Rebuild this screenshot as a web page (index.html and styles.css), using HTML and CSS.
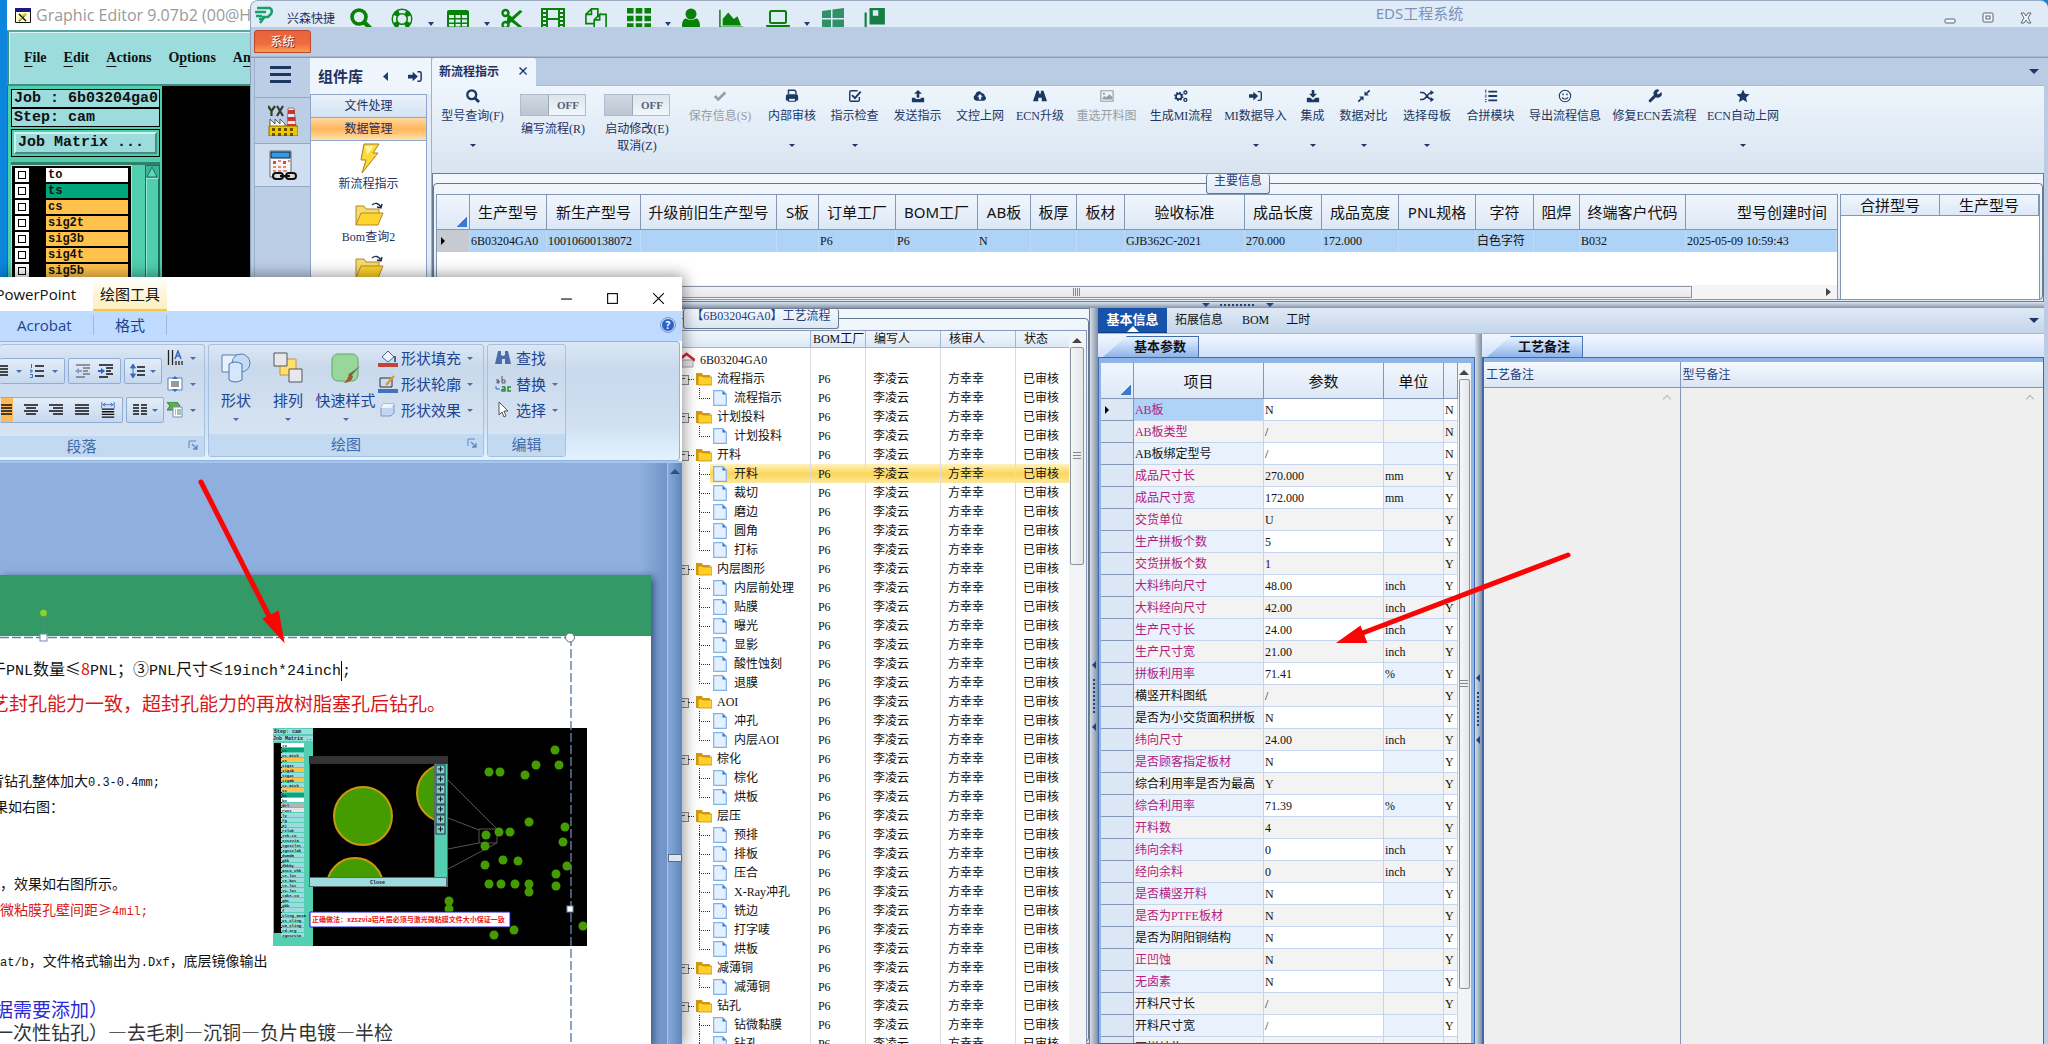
FILE: index.html
```html
<!DOCTYPE html>
<html lang="zh-CN">
<head>
<meta charset="utf-8">
<title>EDS工程系统</title>
<link rel="stylesheet" href="styles.css">
</head>
<body>
<svg class="defs" aria-hidden="true">
  <symbol id="search" viewBox="0 0 22 22"><circle cx="9" cy="9" r="7" fill="none" stroke="currentColor" stroke-width="3.6"/><path d="M14 14l6.500 6.500" stroke="currentColor" stroke-width="4.500"/></symbol>
  <symbol id="ring" viewBox="0 0 22 22"><circle cx="11" cy="11" r="7.500" fill="none" stroke="currentColor" stroke-width="6"/><circle cx="11" cy="11" r="7.500" fill="none" stroke="#dfebf7" stroke-width="3" stroke-dasharray="6.500 5.280" stroke-dashoffset="3.250"/></symbol>
  <symbol id="table" viewBox="0 0 22 22"><rect x="0" y="2" width="22" height="18" rx="2" fill="currentColor"/><path d="M2 7h5v3H2zM8.500 7h5v3h-5zM15 7h5v3h-5zM2 11.500h5v3H2zM8.500 11.500h5v3h-5zM15 11.500h5v3h-5zM2 16h5v2.500H2zM8.500 16h5v2.500h-5zM15 16h5v2.500h-5z" fill="#dfebf7"/></symbol>
  <symbol id="cut" viewBox="0 0 22 22"><g fill="none" stroke="currentColor" stroke-width="2.400"><circle cx="4.500" cy="5" r="3"/><circle cx="4.500" cy="17" r="3"/></g><path d="M7 6l4 3 8-7 2.500 1.500L7 17l-1.500-2zM12 11l9.500 8-2.500 1.500-9-7z" fill="currentColor"/></symbol>
  <symbol id="film" viewBox="0 0 24 22"><path d="M1 1h22v20H1zM6 1v20M18 1v20M6 11h12M1 5h5M1 9h5M1 13h5M1 17h5M18 5h5M18 9h5M18 13h5M18 17h5" fill="none" stroke="currentColor" stroke-width="2"/></symbol>
  <symbol id="copy" viewBox="0 0 24 24"><path d="M7 1h7v9M10 17H1V7l6-6v6H1M16 7h7v16H10V13l6-6v6h-6" fill="none" stroke="currentColor" stroke-width="1.800"/></symbol>
  <symbol id="grid" viewBox="0 0 22 20"><path d="M0 0h6v5H0zM8 0h6v5H8zM16 0h6v5h-6zM0 7h6v5H0zM8 7h6v5H8zM16 7h6v5h-6zM0 14h6v5H0zM8 14h6v5H8zM16 14h6v5h-6z" fill="currentColor"/></symbol>
  <symbol id="user" viewBox="0 0 20 22"><circle cx="10" cy="6" r="5.500" fill="currentColor"/><path d="M1 18c0-5 2-7.500 4-7.500q5 3 10 0c2 0 4 2.500 4 7.500 0 2-1 3-3 3H4c-2 0-3-1-3-3z" fill="currentColor"/></symbol>
  <symbol id="area" viewBox="0 0 26 22"><path d="M1 1v19h25" fill="none" stroke="currentColor" stroke-width="1.600"/><path d="M4 18v-7l6-7 6 7 4-3 4 10z" fill="currentColor"/></symbol>
  <symbol id="laptop" viewBox="0 0 24 20"><rect x="4" y="2" width="16" height="12" rx="1.500" fill="none" stroke="currentColor" stroke-width="2"/><path d="M0 16h24v1q-1 2-3 2H3q-2 0-3-2z" fill="currentColor"/></symbol>
  <symbol id="win" viewBox="0 0 22 22"><path d="M0 3l9-1.300V10H0zM10.500 1.500L22 0v10H10.500zM0 11.500h9V20l-9-1.300zM10.500 11.500H22V22l-11.500-1.600z" fill="#2e9266"/></symbol>
  <symbol id="clone" viewBox="0 0 20 20"><path d="M5 0h14v15H5zM8 2v5h5V2z" fill="#177f45" fill-rule="evenodd"/><path d="M1.500 4v14.500H16" fill="none" stroke="#177f45" stroke-width="2"/></symbol>
  <symbol id="check" viewBox="0 0 16 16"><path d="M2 8l4 4 8-8" fill="none" stroke="currentColor" stroke-width="3"/></symbol>
  <symbol id="print" viewBox="0 0 16 16"><path d="M4 6V1.500h7l1.500 1.500V6" fill="none" stroke="currentColor" stroke-width="1.600"/><path d="M1 8q0-2 2-2h10q2 0 2 2v5h-3v-2.500H4V13H1z" fill="currentColor"/><path d="M4 10.500h8V14H4z" fill="none" stroke="currentColor" stroke-width="1.400"/></symbol>
  <symbol id="checksq" viewBox="0 0 16 16"><path d="M13 9v3.500q0 1.500-1.500 1.500h-8Q2 14 2 12.500v-9Q2 2 3.500 2H11" fill="none" stroke="currentColor" stroke-width="1.600"/><path d="M4.500 7l3.500 3.500L14.500 3" fill="none" stroke="currentColor" stroke-width="2.200"/></symbol>
  <symbol id="upload" viewBox="0 0 16 16"><path d="M8 1l4.500 4.500H9.500V10h-3V5.500h-3zM1 10h4v1.500h6V10h4v5H1z" fill="currentColor"/></symbol>
  <symbol id="download" viewBox="0 0 16 16"><path d="M6.500 1h3v4.500h3L8 10 3.500 5.500h3zM1 10h4l3 2.500 3-2.500h4v5H1z" fill="currentColor"/></symbol>
  <symbol id="cloud" viewBox="0 0 18 16"><path d="M4 14a4 4 0 0 1-1-7.500 4.500 4.500 0 0 1 8.500-2A3 3 0 0 1 15 8a3.200 3.200 0 0 1-1 6z" fill="currentColor"/><path d="M9 5.500l3.500 3.500h-2v3.500h-3V9h-2z" fill="#e8f1fa"/></symbol>
  <symbol id="road" viewBox="0 0 16 16"><path d="M4 2h3v3h2V2h3l4 12h-6v-4H6v4H0z" fill="currentColor"/></symbol>
  <symbol id="image" viewBox="0 0 16 16"><path d="M1 2h14v12H1z" fill="none" stroke="currentColor" stroke-width="1.300"/><circle cx="4.500" cy="5.500" r="1.300" fill="currentColor"/><path d="M3 12V10l2-2 2 1.500L11 6l3 3v3z" fill="currentColor"/></symbol>
  <symbol id="cogs" viewBox="0 0 16 16"><g fill="none" stroke="currentColor"><circle cx="5.500" cy="8.500" r="3.200" stroke-width="2"/><circle cx="5.500" cy="8.500" r="4.600" stroke-width="1.500" stroke-dasharray="1.800 1.800"/><circle cx="13" cy="4" r="1.700" stroke-width="1.500"/><circle cx="13" cy="12.500" r="1.700" stroke-width="1.500"/></g></symbol>
  <symbol id="signin" viewBox="0 0 16 16"><path d="M0 6h5V3l5.500 5L5 13v-3H0z" fill="currentColor"/><path d="M10 3h2.500Q14 3 14 4.500v7q0 1.500-1.500 1.500H10" fill="none" stroke="currentColor" stroke-width="1.600"/></symbol>
  <symbol id="compress" viewBox="0 0 16 16"><path d="M8.500 2.500v5h5zM7.500 13.500v-5h-5z" fill="currentColor"/><path d="M10 6l4.500-4.500M6 10l-4.500 4.500" stroke="currentColor" stroke-width="2"/></symbol>
  <symbol id="random" viewBox="0 0 16 16"><path d="M0 4h3q2 0 5 4t5 4M0 12h3q2 0 5-4t5-4" fill="none" stroke="currentColor" stroke-width="1.800"/><path d="M12 1l4 3-4 3zM12 9l4 3-4 3z" fill="currentColor"/></symbol>
  <symbol id="list" viewBox="0 0 16 16"><path d="M5 3h10M5 8h10M5 13h10" stroke="currentColor" stroke-width="2.200"/><path d="M2 .500v4M1 7h2M1 9h2M1 12h2M1 14.500h2" stroke="currentColor"/></symbol>
  <symbol id="smile" viewBox="0 0 16 16"><g fill="none" stroke="currentColor" stroke-width="1.200"><circle cx="8" cy="8" r="6.500"/><path d="M4.500 9.500q3.500 4 7 0"/></g><path d="M5 5h1.500v2H5zM9.500 5H11v2H9.500z" fill="currentColor"/></symbol>
  <symbol id="wrench" viewBox="0 0 16 16"><path d="M2.500 13.500L9 7" stroke="currentColor" stroke-width="3.400" stroke-linecap="round"/><path d="M8 8a4 4 0 0 1 5-6.500L10.500 4v2h2L15 3.500A4 4 0 0 1 8 8z" fill="currentColor"/></symbol>
  <symbol id="star" viewBox="0 0 16 16"><path d="M8 .500l2.200 5 5.300.500-4 3.600 1.200 5.400L8 12.200 3.300 15l1.200-5.400L.500 6l5.300-.500z" fill="currentColor"/></symbol>
  <symbol id="folder" viewBox="0 0 16 14"><path d="M0 13V1h6l1 2h7v10z" fill="#d29a12"/><path d="M2 13V4h4l1 1h9v8z" fill="#ffd02a" stroke="#c88c10" stroke-width=".800"/></symbol>
  <symbol id="doc" viewBox="0 0 14 16"><path d="M.700.700h9l3.600 3.600v11H.700z" fill="#e2f0ff" stroke="#7fb0e8" stroke-width="1.200"/><path d="M9.500 1v3.500H13z" fill="#2c6fd0"/></symbol>
  <symbol id="home" viewBox="0 0 16 16"><path d="M3 8h11v7H3z" fill="#e6e3e6" stroke="#a8a0a8"/><path d="M0 8L7.500 2 16 8.500" fill="none" stroke="#cc2b3a" stroke-width="2.600"/></symbol>
  <symbol id="openfolder" viewBox="0 0 30 26"><path d="M2 24V5h8l2 3h13v4" fill="#f5dc6e" stroke="#b5892b"/><path d="M2 24l5-12h22l-5 12z" fill="#ffd42e" stroke="#b5892b"/><path d="M18 4q5-4 9 2m1-3l-1 4-4-1" fill="none" stroke="#1c2c50" stroke-width="1.400"/></symbol>
  <symbol id="lines" viewBox="0 0 16 16"><path d="M1 3h14M3 6h10M1 9h14M3 12h10" stroke="#111" stroke-width="1.500"/></symbol>
  <symbol id="just" viewBox="0 0 16 16"><path d="M1 3h14M1 6h14M1 9h14M1 12h14" stroke="#111" stroke-width="1.500"/></symbol>
  <symbol id="right" viewBox="0 0 16 16"><path d="M1 3h14M5 6h10M1 9h14M5 12h10" stroke="#111" stroke-width="1.500"/></symbol>
  <symbol id="dist" viewBox="0 0 16 18"><path d="M1 0v7M15 0v7M2 3h12M5 1L2.500 3 5 5M11 1l2.500 2L11 5" fill="none" stroke="#3a6bc0"/><path d="M1 8h14M1 11h14M1 14h14M1 17h14" stroke="#111" stroke-width="1.500"/></symbol>
  <symbol id="cols" viewBox="0 0 16 16"><path d="M1 3h6M9 3h6M1 6h6M9 6h6M1 9h6M9 9h6M1 12h6M9 12h6" stroke="#111" stroke-width="1.500"/></symbol>
  <symbol id="nums" viewBox="0 0 16 16"><path d="M6 3h9M6 8h9M6 13h9" stroke="#111" stroke-width="1.500"/><path d="M2.500 1v4M1 7h2v2H1M1 11.500h2.500v3H1" fill="none" stroke="#3a6bc0"/></symbol>
  <symbol id="outdent" viewBox="0 0 16 16"><path d="M1 2h14M8 5h7M8 8h5M8 11h7M1 14h9" stroke="#777" stroke-width="1.500"/><path d="M0 8l4-3v6z" fill="#8aa0c8"/><path d="M3 8h4" stroke="#8aa0c8" stroke-width="2"/></symbol>
  <symbol id="indent" viewBox="0 0 16 16"><path d="M1 2h14M8 5h7M8 8h5M8 11h7M1 14h9" stroke="#111" stroke-width="1.500"/><path d="M7 8L3 5v6z" fill="#2a5fd0"/><path d="M0 8h4" stroke="#2a5fd0" stroke-width="2"/></symbol>
  <symbol id="spacing" viewBox="0 0 16 16"><path d="M7 4h8M7 8h8M7 12h8" stroke="#111" stroke-width="1.500"/><path d="M3 1L.500 5h5zM3 15L.500 11h5zM3 4v8" fill="#3a6bc0" stroke="#3a6bc0"/></symbol>
  <symbol id="textdir" viewBox="0 0 16 16"><path d="M1.500 0v15M5.500 0v15M9 11v4M12 11v4M15 11v4" stroke="#222" stroke-width="1.300"/><path d="M8 9l3-8 3 8M9 6h4" fill="none" stroke="#3a6bc0" stroke-width="1.500"/></symbol>
  <symbol id="alignv" viewBox="0 0 16 16"><path d="M1 2h14v12H1z" fill="#fff" stroke="#5a7db5"/><path d="M4 6h8M4 8h8M4 10h8" stroke="#333"/><path d="M8 0L5 3h6zM8 16l-3-3h6z" fill="#3a6bc0"/></symbol>
  <symbol id="smart" viewBox="0 0 16 16"><path d="M0 0h10l3 4-3 4H0l3-4z" fill="#5eae52" stroke="#3a7d35"/><path d="M6 5h9v10H6z" fill="#fff" stroke="#6f8fb8"/><path d="M8 8h1M10 8h4M8 10h1M10 10h4M8 12h1M10 12h4" stroke="#486"/></symbol>
  <symbol id="launch" viewBox="0 0 10 10"><path d="M1 8V1h7" fill="none" stroke="#5f86bd"/><path d="M4 4l5 5M9 5v4H5" fill="none" stroke="#5f86bd" stroke-width="1.300"/></symbol>
</svg>

<main class="desktop">
  <!-- Graphic Editor -->
  <section class="genesis">
    <header class="g-title">
      <svg width="16" height="15" viewBox="0 0 16 15"><path d="M.500.500h15v14H.500z" fill="#ffffd8" stroke="#111"/><path d="M0 0h16v4H0z" fill="#1a1a80"/><path d="M4 6l7 7M11 6l-7 7" stroke="#111" stroke-width="1.500"/><path d="M7 8l4-2M4 12l3-2" stroke="#e8d000" stroke-width="2"/></svg>
      <span>Graphic Editor 9.07b2 (00@HY)</span>
    </header>
    <nav class="g-menu"><a href="#"><u>F</u>ile</a><a href="#"><u>E</u>dit</a><a href="#"><u>A</u>ctions</a><a href="#">O<u>p</u>tions</a><a href="#">A<u>n</u>alysis</a></nav>
    <div class="g-body">
      <div class="g-side">
        <div class="g-job">Job : 6b03204ga0</div>
        <div class="g-job">Step: cam</div>
        <div class="g-frame"><button class="g-matrix">Job Matrix ...</button></div>
        <div class="g-layers">
          <ul>
            <li><label><input type="checkbox"><span class="lay white">to</span></label></li>
            <li><label><input type="checkbox"><span class="lay green">ts</span></label></li>
            <li><label><input type="checkbox"><span class="lay">cs</span></label></li>
            <li><label><input type="checkbox"><span class="lay">sig2t</span></label></li>
            <li><label><input type="checkbox"><span class="lay">sig3b</span></label></li>
            <li><label><input type="checkbox"><span class="lay">sig4t</span></label></li>
            <li><label><input type="checkbox"><span class="lay">sig5b</span></label></li>
          </ul>
          <div class="g-scroll"><svg width="12" height="12" viewBox="0 0 12 12"><path d="M6 1l5 10H1z" fill="#5fd9bb" stroke="#1d6f5b"/></svg><i></i></div>
        </div>
      </div>
    </div>
  </section>

  <!-- EDS -->
  <section class="eds">
    <header class="e-title">
      <svg class="logo" width="18" height="18" viewBox="0 0 18 18"><path d="M2 2h13q3 2 1 6l-3 3H7M0 6h11M1 10h6M4 13h4l-3 4" fill="none" stroke="#17a06b" stroke-width="2.500"/></svg>
      <span class="brand">兴森快捷</span>
      <div class="quick">
        <button aria-label="查找"><svg><use href="#search"/></svg></button>
        <button aria-label="帮助"><svg><use href="#ring"/></svg></button>
        <button aria-label="表格"><svg><use href="#table"/></svg></button>
        <button aria-label="剪切"><svg><use href="#cut"/></svg></button>
        <button aria-label="影片"><svg><use href="#film"/></svg></button>
        <button aria-label="复制"><svg><use href="#copy"/></svg></button>
        <button aria-label="网格"><svg><use href="#grid"/></svg></button>
        <button aria-label="用户"><svg><use href="#user"/></svg></button>
        <button aria-label="图表"><svg><use href="#area"/></svg></button>
        <button aria-label="电脑"><svg><use href="#laptop"/></svg></button>
        <button aria-label="窗口"><svg><use href="#win"/></svg></button>
        <button aria-label="副本"><svg><use href="#clone"/></svg></button>
      </div>
      <h1>EDS工程系统</h1>
      <div class="e-ctl">
        <button aria-label="最小化"><svg viewBox="0 0 12 12"><rect x="1" y="7" width="10" height="4" rx="1"/></svg></button>
        <button aria-label="还原"><svg viewBox="0 0 12 12"><rect x="1" y="1" width="10" height="9" rx="1"/><rect x="4" y="4" width="4" height="3"/></svg></button>
        <button aria-label="关闭"><svg viewBox="0 0 12 12"><path d="M1 1h3l2 3 2-3h3L8 6l3 5H8L6 8l-2 3H1l3-5z"/></svg></button>
      </div>
    </header>
    <div class="e-band"><button class="sys">系统</button></div>
    <div class="e-main">
      <aside class="rail">
        <button class="burger" aria-label="菜单"><i></i><i></i><i></i></button>
        <button aria-label="工厂"><svg width="30" height="31" viewBox="0 0 30 31"><path d="M0 1l3.500 5v5M7 1L3.500 6M9 1l6 10M15 1L9 11" fill="none" stroke="#333c2a" stroke-width="2.200"/><path d="M20 3h6l2 18h-9z" fill="#e9e9e9" stroke="#888"/><path d="M20 5h7v4h-7zM19.500 12h8v4h-8zM19 19h9v4h-9z" fill="#cc3333"/><path d="M2 22v-8l5 5v-5l5 5v-5l5 5v3z" fill="#fff" stroke="#555"/><path d="M1 21h29v10H1z" fill="#f0c800" stroke="#8a6d00"/><path d="M4 23h3v3H4zM10 23h3v3h-3zM16 23h3v3h-3zM22 23h3v3h-3zM4 28h3v3H4zM10 28h3v3h-3zM16 28h3v3h-3zM22 28h3v3h-3z" fill="#6b5200"/></svg></button>
        <button class="on" aria-label="日历"><svg width="30" height="31" viewBox="0 0 30 31"><path d="M2 1h21v26H2z" fill="#f6f6f6" stroke="#667"/><path d="M3 2h19v6H3z" fill="#2f9be0" stroke="#124"/><path d="M5 11h3v3H5zM15 11h3v3h-3z" fill="#e04a20"/><path d="M10 11h3M20 11h2M5 17h3M10 17h3M15 17h3M5 21h3M10 21h3M15 21h4" stroke="#d86a50" stroke-width="1.500"/><g fill="none" stroke="#111" stroke-width="2"><rect x="5" y="23" width="10" height="6" rx="3" fill="#ddd"/><rect x="18" y="23" width="10" height="6" rx="3" fill="#ddd"/><path d="M12 26h10"/></g></svg></button>
      </aside>
      <aside class="lib">
        <header><h2>组件库</h2><svg width="5" height="9" viewBox="0 0 5 9"><path d="M5 0v9L0 4.500z" fill="#1f3f70"/></svg><svg class="nav" width="15" height="15"><use href="#signin"/></svg></header>
        <div class="acc">
          <button>文件处理</button>
          <button class="on">数据管理</button>
          <div class="items">
            <a href="#"><svg width="30" height="31" viewBox="0 0 30 31"><path d="M10 1h15l-6 9h5L8 30l4-13H7z" fill="#ffd83a" stroke="#a77e1a"/><path d="M11 3h9l-7 9z" fill="#fff3a8"/></svg>新流程指示</a>
            <a href="#"><svg width="30" height="26"><use href="#openfolder"/></svg>Bom查询2</a>
            <a href="#"><svg width="30" height="26"><use href="#openfolder"/></svg>Bom查询</a>
          </div>
        </div>
      </aside>
      <div class="work">
        <div class="doctabs"><span class="doctab">新流程指示<button aria-label="关闭">×</button></span><i class="dn"></i></div>
        <div class="ribbon" id="ribbon"></div>
        <section class="group info">
          <h3>主要信息</h3>
          <div class="info-row">
            <div class="gridbox">
              <table class="main">
                <colgroup><col class="w33"><col class="w77"><col class="w94"><col class="w136"><col class="w42"><col class="w77"><col class="w82"><col class="w53"><col class="w46"><col class="w48"><col class="w120"><col class="w77"><col class="w77"><col class="w77"><col class="w58"><col class="w46"><col class="w106"><col></colgroup>
                <thead><tr><th class="corner"></th><th>生产型号</th><th>新生产型号</th><th>升级前旧生产型号</th><th>S板</th><th>订单工厂</th><th>BOM工厂</th><th>AB板</th><th>板厚</th><th>板材</th><th>验收标准</th><th>成品长度</th><th>成品宽度</th><th>PNL规格</th><th>字符</th><th>阻焊</th><th>终端客户代码</th><th class="end">型号创建时间</th></tr></thead>
                <tbody><tr><td class="mark"></td><td>6B03204GA0</td><td>10010600138072</td><td></td><td></td><td>P6</td><td>P6</td><td>N</td><td></td><td></td><td>GJB362C-2021</td><td>270.000</td><td>172.000</td><td></td><td>白色字符</td><td></td><td>B032</td><td>2025-05-09 10:59:43</td></tr></tbody>
              </table>
              <div class="hscroll"><i></i><b></b></div>
            </div>
            <div class="sidebox"><table class="side"><thead><tr><th>合拼型号</th><th>生产型号</th></tr></thead></table></div>
          </div>
        </section>
        <div class="hsplit"><i></i><s></s><i></i></div>
        <div class="lower">
          <section class="group flow">
            <h3>【6B03204GA0】工艺流程</h3>
            <div class="flow-body">
              <table class="tree"><colgroup><col><col class="w55"><col class="w75"><col class="w75"><col class="w53"></colgroup>
                <thead><tr><th></th><th class="tight">BOM工厂</th><th>编写人</th><th>核审人</th><th>状态</th></tr></thead><tbody id="tree"></tbody></table>
              <div class="vscroll"><i class="up"></i><i class="thumb"></i></div>
            </div>
          </section>
          <div class="vsplit"><i></i><s></s><i></i></div>
          <section class="detail">
            <nav class="tabs"><a class="on" href="#">基本信息</a><a href="#">拓展信息</a><a href="#">BOM</a><a href="#">工时</a><i class="dn"></i></nav>
            <div class="panes">
              <div class="pane left">
                <div class="subtab"><span>基本参数</span></div>
                <div class="frame">
                  <table class="params"><colgroup><col class="w33"><col class="w130"><col class="w120"><col class="w60"><col></colgroup>
                    <thead><tr><th class="corner"></th><th>项目</th><th>参数</th><th>单位</th><th></th></tr></thead><tbody id="params"></tbody></table>
                  <div class="vscroll"><i class="up"></i><i class="thumb"></i></div>
                </div>
              </div>
              <div class="vsplit low"><i></i><s></s><i></i></div>
              <div class="pane right">
                <div class="subtab"><span>工艺备注</span></div>
                <div class="frame notes">
                  <div class="note"><h4>工艺备注</h4><i class="chev"></i></div>
                  <div class="note"><h4>型号备注</h4><i class="chev"></i></div>
                </div>
              </div>
            </div>
          </section>
        </div>
      </div>
    </div>
  </section>

  <!-- PowerPoint -->
  <section class="ppt">
    <header class="p-title">
      <span class="p-name">Microsoft PowerPoint</span><span class="p-tool">绘图工具</span>
      <div class="p-ctl">
        <button aria-label="最小化"><svg viewBox="0 0 12 12"><path d="M1 6.500h10"/></svg></button>
        <button aria-label="最大化"><svg viewBox="0 0 12 12"><rect x="1.500" y="1.500" width="9" height="9"/></svg></button>
        <button aria-label="关闭"><svg viewBox="0 0 12 12"><path d="M1 1l10 10M11 1L1 11"/></svg></button>
      </div>
    </header>
    <nav class="p-tabs"><a class="acro" href="#">Acrobat</a><a class="fmt" href="#">格式</a><button class="help" aria-label="帮助">?</button></nav>
    <div class="p-ribbon">
      <div class="pg para">
        <div class="pg-body">
          <div class="prows">
            <div class="prow">
              <div class="seg"><button aria-label="项目符号"><svg><use href="#just"/></svg></button><i class="ca"></i><button aria-label="编号"><svg><use href="#nums"/></svg></button><i class="ca"></i></div>
              <div class="seg"><button aria-label="减少缩进"><svg><use href="#outdent"/></svg></button><button aria-label="增加缩进"><svg><use href="#indent"/></svg></button></div>
              <div class="seg"><button aria-label="行距"><svg><use href="#spacing"/></svg></button><i class="ca"></i></div>
            </div>
            <div class="prow">
              <div class="seg wide"><button class="hot" aria-label="左对齐"><svg><use href="#just"/></svg></button><button aria-label="居中"><svg><use href="#lines"/></svg></button><button aria-label="右对齐"><svg><use href="#right"/></svg></button><button aria-label="两端对齐"><svg><use href="#just"/></svg></button><button aria-label="分散对齐"><svg><use href="#dist"/></svg></button></div>
              <div class="seg"><button aria-label="分栏"><svg><use href="#cols"/></svg></button><i class="ca"></i></div>
            </div>
          </div>
          <div class="pcol">
            <button aria-label="文字方向"><svg><use href="#textdir"/></svg><i class="ca"></i></button>
            <button aria-label="对齐文本"><svg><use href="#alignv"/></svg><i class="ca"></i></button>
            <button aria-label="SmartArt"><svg><use href="#smart"/></svg><i class="ca"></i></button>
          </div>
        </div>
        <footer>段落<svg><use href="#launch"/></svg></footer>
      </div>
      <div class="pg draw">
        <div class="pg-body">
          <button class="big"><svg viewBox="0 0 30 32"><path d="M1 3h17v17H1z" fill="#e8f1fc" stroke="#5b7cae"/><circle cx="20" cy="11" r="9" fill="#c5dbf5" stroke="#5b7cae"/><path d="M8 12q6-4 13 0v16q-7 4-13 0z" fill="#d5e7fb" stroke="#4a74b4"/></svg>形状<i class="ca"></i></button>
          <button class="big"><svg viewBox="0 0 30 32"><path d="M7 7h16v16H7z" fill="#ffdf70" stroke="#c29a2a"/><path d="M1 1h13v13H1zM16 17h13v13H16z" fill="#e6e8ec" stroke="#555"/></svg>排列<i class="ca"></i></button>
          <button class="big"><svg viewBox="0 0 30 32"><rect x="1" y="2" width="26" height="27" rx="6" fill="#98d69a" stroke="#5da765"/><path d="M29 14l-9 10-2-2z" fill="#666"/><path d="M18 21l4 3q-1 7-10 7 5-2 6-10z" fill="#a05a2c"/></svg>快速样式<i class="ca"></i></button>
          <div class="plist">
            <button><svg viewBox="0 0 20 18"><path d="M4 8l6-6 6 6-6 5z" fill="#eef3fa" stroke="#4a6390"/><path d="M0 14h20v4H0z" fill="#c4443c"/><path d="M17 7v6" stroke="#4a6390" stroke-width="2"/></svg>形状填充<i class="ca"></i></button>
            <button><svg viewBox="0 0 20 18"><path d="M2 3h12v9H2z" fill="none" stroke="#333"/><path d="M16 1L8 10" stroke="#d89a30" stroke-width="2.500"/><path d="M0 14h20v4H0z" fill="#4472b8"/></svg>形状轮廓<i class="ca"></i></button>
            <button><svg viewBox="0 0 20 18"><path d="M5 3h11v9l-3 3H3V7z" fill="#c3d5f2" stroke="#7d96c4"/><path d="M5 3h11l-3 4H3z" fill="#eef4fd"/></svg>形状效果<i class="ca"></i></button>
          </div>
        </div>
        <footer>绘图<svg><use href="#launch"/></svg></footer>
      </div>
      <div class="pg edit">
        <div class="pg-body">
          <div class="plist">
            <button><svg viewBox="0 0 20 18"><path d="M5 2h3v4l2 1 2-1V2h3l3 13h-6v-5H9v5H2z" fill="#4a6ca8"/></svg>查找</button>
            <button><svg viewBox="0 0 20 18"><path d="M3 5q3-1 3 1v2H4q-1-2 2-2M9 1v7h3V5H9" fill="none" stroke="#556"/><path d="M3 11v3h4" fill="none" stroke="#3a6bc0"/><path d="M9 12q3-1 3 1v3h-3q-1-2 3-2M18 12h-3v4h3" fill="none" stroke="#2a8a3a" stroke-width="1.500"/></svg>替换<i class="ca"></i></button>
            <button><svg viewBox="0 0 20 18"><path d="M6 1v13l3-3 2 5 2-1-2-5h4z" fill="#fff" stroke="#555"/></svg>选择<i class="ca"></i></button>
          </div>
        </div>
        <footer>编辑</footer>
      </div>
    </div>
    <div class="stage">
      <article class="slide">
        <div class="banner"></div>
        <div class="copy">
          <p class="l1 cut">于<span class="m">PNL</span>数量≤<em>8</em><span class="m">PNL</span>；③<span class="m">PNL</span>尺寸≤<span class="m">19inch*24inch</span><i class="caret"></i><span class="m">;</span></p>
          <p class="l2 cut kai">艺封孔能力一致，超封孔能力的再放树脂塞孔后钻孔。</p>
          <p class="l3 cut">背钻孔整体加大<span class="s">0.3-0.4mm;</span></p>
          <p class="l4 trim">果如右图：</p>
          <p class="l3">，效果如右图所示。</p>
          <p class="l4 red">微粘膜孔壁间距≥<span class="s">4mil;</span></p>
          <p class="l5"><span class="s">at/b</span>，文件格式输出为<span class="s">.Dxf</span>，底层镜像输出</p>
          <p class="l6 trim blue">据需要添加）</p>
          <p class="l7 trim">一次性钻孔）—去毛刺—沉铜—负片电镀—半检</p>
        </div>
        <svg class="shot" width="314" height="218" viewBox="273 728 314 218" id="shot"></svg>
        <svg class="sel" width="580" height="442" viewBox="0 602 580 442"><path d="M0 637.500H571M571 637V1044M43.500 618v14" fill="none" stroke="#5f7fa8" stroke-width="1.400" stroke-dasharray="9 3"/><circle cx="43.500" cy="613" r="4" fill="#7fd63a" stroke="#5a8a3a"/><rect x="40" y="634" width="7" height="7" fill="#fff" stroke="#6f8cb0"/><circle cx="570" cy="637.500" r="4.500" fill="#fff" stroke="#666"/><rect x="567" y="906" width="6" height="6" fill="#fff" stroke="#6f8cb0"/></svg>
      </article>
      <div class="p-scroll"><i class="up"></i><i class="thumb"></i></div>
    </div>
  </section>

  <svg class="arrow a1" width="100" height="180" viewBox="195 470 100 180"><path d="M201 482L272 622" stroke="#fa0505" stroke-width="5" stroke-linecap="round"/><path d="M283 640L264 619 278 612z" fill="#fa0505" stroke="#fa0505" stroke-width="2"/></svg>
  <svg class="arrow a2" width="250" height="110" viewBox="1330 545 250 110"><path d="M1568 555L1360 634" stroke="#fa0505" stroke-width="5" stroke-linecap="round"/><path d="M1339 642L1360 627 1366 642z" fill="#fa0505" stroke="#fa0505" stroke-width="2"/></svg>
</main>
<script src="script.js"></script>
</body>
</html>
```
FILE: styles.css
```css
* { box-sizing: border-box; }
body { margin: 0; font: 12px/16px "Liberation Serif", "Noto Sans CJK SC", serif; color: #111; }
button { font: inherit; color: inherit; background: none; border: 0; padding: 0; }
a { color: inherit; text-decoration: none; }
h1, h2, h3, h4, p, ul { margin: 0; padding: 0; font-weight: normal; font-size: inherit; }
ul { list-style: none; }
table { border-collapse: separate; border-spacing: 0; table-layout: fixed; width: 100%; }
th { font-weight: normal; }
th, td { padding: 0; overflow: hidden; white-space: nowrap; text-align: left; }
svg { display: block; flex: none; }
.defs { position: absolute; width: 0; height: 0; }
.desktop { position: relative; height: 100vh; overflow: hidden; background: #0c86dc; }

/* Graphic Editor */
.genesis { position: absolute; left: 7px; top: 0; width: 400px; height: 320px; background: #000; }
.g-title { display: flex; align-items: center; gap: 5px; height: 30px; padding-left: 8px; background: #fff; color: #9a9a9a; font: 16px/28px "Open Sans", sans-serif; white-space: nowrap; }
.g-menu { display: flex; gap: 17px; height: 56px; padding: 16px 15px 0; background: #9cdcdc; border: 2px solid #3c8f86; border-top-color: #5aa6a0; box-shadow: inset 1px 1px #d8f4f4; font: bold 14px/20px "Liberation Serif", serif; }
.g-menu u { text-underline-offset: 4px; }
.g-side { width: 155px; height: 234px; padding: 3px 2px 0 3px; background: #50cfae; border-left: 1px solid #2c6f60; }
.g-job { height: 19px; padding-left: 2px; border: 1px solid #000; background: #9cdcdc; font: bold 15px/17px "Liberation Mono", monospace; white-space: nowrap; }
.g-frame { margin-top: 2px; padding: 2px; border: 1px solid #000; background: #50cfae; }
.g-matrix { display: block; width: 100%; height: 22px; padding-left: 2px; border: 2px solid; border-color: #cdf2f0 #4d8a86 #4d8a86 #cdf2f0; background: #9cdcdc; font: bold 15px/18px "Liberation Mono", monospace; text-align: left; }
.g-layers { display: flex; justify-content: space-between; margin-top: 5px; border-top: 3px solid #2f7f6c; }
.g-layers ul { width: 121px; padding: 2px 3px 0; background: #000; border: 1px solid #9fe8d6; }
.g-layers label { display: flex; justify-content: space-between; height: 16px; }
.g-layers input { appearance: none; width: 14px; height: 14px; margin: 0; background: #000; border: 2px solid #fff; box-shadow: inset 0 0 0 1px #fff, inset 0 0 0 2px #000, inset 0 0 0 5px #fff; }
.lay { width: 82px; height: 14px; padding-left: 2px; background: #ffc34d; font: bold 12px/14px "Liberation Mono", monospace; overflow: hidden; }
.lay.white { background: #fff; }
.lay.green { background: #00a57c; }
.g-scroll { width: 15px; background: #3fb394; border: 1px solid #1d6f5b; }
.g-scroll i { display: block; height: 110px; background: #50cfae; border: 1px solid #9fe8d6; border-right-color: #1d6f5b; }

/* EDS window */
.eds { position: absolute; left: 250px; right: 0; top: 0; bottom: 0; display: flex; flex-direction: column; background: #b9cce4; border-top: 1px solid #9aaac0; border-left: 1px solid #8ea2bd; border-radius: 8px 8px 0 0; color: #1f2f5f; overflow: hidden; }
.e-title { flex: none; display: flex; align-items: flex-start; height: 26px; background: #dfebf7; }
.logo { margin: 5px 14px 0 4px; }
.brand { width: 62px; padding-top: 10px; white-space: nowrap; }
.quick { display: grid; grid-template-columns: 41px 56px 54px 41px 43px 43px 52px 40px 47px 55px 42px 48px; height: 30px; padding-top: 6px; color: #078107; }
.quick button { display: flex; align-items: center; }
.quick svg { width: 24px; height: 22px; }
.quick button:nth-child(2)::after, .quick button:nth-child(3)::after, .quick button:nth-child(7)::after, .quick button:nth-child(10)::after { content: ""; margin: 10px 0 0 14px; border: 3px solid transparent; border-top: 4px solid #1f3f70; border-bottom: 0; }
.e-title h1 { flex: 1; text-align: center; padding-right: 16px; font: 15px/24px "Noto Sans", "Noto Sans CJK SC", sans-serif; color: #7d92ba; }
.e-ctl { display: flex; gap: 26px; padding: 11px 16px 0 0; }
.e-ctl svg { width: 12px; height: 12px; fill: #f2f7fc; stroke: #5c6478; }
.e-band { flex: none; height: 30px; padding: 3px 0 0 3px; border-bottom: 1px solid #a8b7c9; background: #b9cce4; }
.sys { width: 57px; height: 23px; border: 1px solid #b54a2c; border-radius: 3px 3px 0 0; background: linear-gradient(#e9623c, #ef6a3f 60%, #fb9b52); color: #fff; text-shadow: 1px 1px #803018; }
.e-main { flex: 1; min-height: 0; display: flex; padding: 0 4px 0 3px; border-top: 1px solid #8a9ab0; }
.rail { width: 56px; background: #bccee6; border-left: 1px solid #9fb2cc; }
.rail button { display: flex; align-items: center; justify-content: center; width: 100%; height: 46px; border-bottom: 1px solid #93a8c6; }
.rail .burger { flex-direction: column; gap: 4px; height: 40px; padding: 0 4px 6px 0; }
.burger i { width: 21px; height: 3px; background: #1d3763; }
.rail .on { height: 43px; background: #cfdef0; }
.lib { width: 122px; padding-right: 4px; background: #e4edf7; border-right: 1px solid #9fb2cc; }
.lib header { display: flex; align-items: center; gap: 20px; height: 36px; padding-left: 8px; background: #eff5fc; margin-right: -4px; }
.lib h2 { font: bold 15px/20px "Noto Sans CJK SC", sans-serif; }
.lib .nav { color: #1d3763; }
.acc { border: 1px solid #8ea6c8; background: #fff; height: 200px; }
.acc button { display: block; width: 100%; height: 23px; background: linear-gradient(#eaf2fb, #d3e2f3); border-bottom: 1px solid #8ea6c8; }
.acc .on { background: linear-gradient(#ffd9a0, #ffb65c 50%, #ffd08a 80%, #ffe3b5); }
.items { padding-top: 2px; }
.items a { display: flex; flex-direction: column; align-items: center; gap: 2px; margin-bottom: 9px; white-space: nowrap; }
.work { flex: 1; min-width: 0; display: flex; flex-direction: column; }
.doctabs { flex: none; display: flex; justify-content: space-between; height: 28px; padding-right: 5px; border-bottom: 1px solid #a5b9d4; }
.doctab { display: flex; align-items: center; gap: 18px; width: 104px; height: 28px; padding: 0 0 3px 7px; background: #eef5fc; border-radius: 3px 3px 0 0; font: bold 12px/20px "Noto Sans CJK SC", sans-serif; white-space: nowrap; }
.dn { align-self: center; border: 5px solid transparent; border-top-color: #1d3763; border-bottom: 0; }
.ribbon { flex: none; display: grid; grid-template-columns: 77px 84px 84px 82px 62px 63px 63px 62px 58px 75px 74px 75px 39px 63px 64px 63px 86px 93px 84px; align-items: start; height: 87px; padding: 3px 4px 0 2px; background: linear-gradient(#eef5fc, #d8e4f1); }
.tool { display: flex; flex-direction: column; align-items: center; height: 62px; color: #1d3763; white-space: nowrap; }
.tool svg { width: 14px; height: 14px; margin-bottom: 5px; }
.tool.gray { color: #989da5; }
.tool i { margin-top: 20px; border: 3px solid transparent; border-top-color: #1d3763; border-bottom: 0; }
.toggle { display: flex; flex-direction: column; align-items: center; padding-top: 5px; text-align: center; line-height: 17px; }
.toggle div { display: flex; align-items: center; width: 66px; height: 22px; margin-bottom: 5px; border: 1px solid #b0bccb; background: linear-gradient(#dde5ee, #f2f6fa); font-weight: bold; font-size: 11px; color: #54617a; }
.toggle input { appearance: none; width: 28px; height: 20px; margin: 0 8px 0 0; background: linear-gradient(#d0d8e1, #bcc6d2); border-right: 1px solid #9aa8b8; }

.group { position: relative; background: linear-gradient(#f2f7fd, #e1ebf6 150px); border: 1px solid #6d7c93; }
.group::before { content: ""; position: absolute; left: 0; right: 0; top: 9px; bottom: 1px; border: 1px solid #67788f; border-radius: 4px; }
.group > * { position: relative; }
.group h3 { width: fit-content; height: 20px; margin: 0 auto; padding: 0 7px; border: 1px solid #67788f; border-top: 0; border-radius: 3px; background: linear-gradient(#f4f8fd, #dde8f4); line-height: 14px; color: #24407e; }
.info { flex: none; height: 129px; }
.info-row { display: flex; gap: 2px; height: 106px; padding: 0 3px; }
.gridbox { flex: 1; min-width: 0; display: flex; flex-direction: column; justify-content: space-between; background: #fff; border: 1px solid #8396b5; }
.sidebox { width: 200px; background: #fff; border: 1px solid #8396b5; }
.main, .side, .params { color: #111; }
.main th, .side th, .params th { font: 15px/20px "Noto Sans", "Noto Sans CJK SC", sans-serif; text-align: center; border-right: 1px solid #8396b5; border-bottom: 1px solid #8396b5; background: linear-gradient(#f1f6fc, #dde8f6); }
.main th { height: 35px; }
.main th.end { text-align: right; padding-right: 10px; border-right: 0; }
.main td { height: 22px; padding-left: 1px; background: #afd3f7; border-right: 1px solid #bedaf6; }
.main td.mark { background: #c6cbd2; }
.side th { height: 21px; line-height: 18px; }
th.corner { background: linear-gradient(135deg, transparent 50%, #3b7ad0 50%) no-repeat 20px 21px / 10px 11px, linear-gradient(#f1f6fc, #dde8f6) !important; }
.mark::before { content: ""; display: block; width: 0; margin-left: 3px; border: 4px solid transparent; border-left-color: #000; border-right: 0; }
.w33 { width: 33px; } .w42 { width: 42px; } .w46 { width: 46px; } .w48 { width: 48px; } .w53 { width: 53px; } .w55 { width: 55px; } .w58 { width: 58px; } .w60 { width: 60px; } .w75 { width: 75px; } .w77 { width: 77px; } .w82 { width: 82px; } .w94 { width: 94px; } .w106 { width: 106px; } .w120 { width: 120px; } .w130 { width: 130px; } .w136 { width: 136px; }
.hscroll { display: flex; justify-content: space-between; align-items: center; height: 14px; padding-right: 6px; background: #f4f4f4; }
.hscroll i { width: 90%; height: 12px; border: 1px solid #8b93a0; background: repeating-linear-gradient(90deg, #888 0 1px, transparent 1px 2px) no-repeat 51% 50% / 8px 8px, linear-gradient(#f3f4f6, #e6e8ec); }
.hscroll b { border: 4px solid transparent; border-left: 5px solid #444; border-right: 0; }
.hsplit { flex: none; display: flex; justify-content: center; align-items: center; gap: 10px; height: 6px; background: linear-gradient(#dce6f2, #8493a6); }
.hsplit i { border: 4px solid transparent; border-top-color: #24407e; border-bottom: 0; }
.hsplit s { width: 36px; height: 2px; background: repeating-linear-gradient(90deg, #24407e 0 2px, transparent 2px 4px); }

.lower { flex: 1; min-height: 0; display: flex; }
.flow { width: calc(41% - 3px); }
.flow-body { display: flex; height: 100%; margin: 1px 2px 0 3px; padding: 0; background: #fff; border: 1px solid #8396b5; overflow: hidden; }
.tree { color: #111; align-self: flex-start; flex: 1; }
.tree th { height: 17px; padding-left: 8px; line-height: 16px; border-right: 1px solid #9fb6d4; border-bottom: 1px solid #9fb6d4; background: linear-gradient(#f1f6fc, #dde8f6); }
.tree th.tight { padding-left: 2px; }
.tree td { position: relative; height: 19px; padding-left: 7px; border-right: 1px solid #dcdcdc; }
.tree th:last-child, .tree td:last-child { border-right: 0; }
.tree .node { display: flex; align-items: center; gap: 5px; padding-left: 235px; }
.tree tr:first-child td { height: 21px; padding-top: 3px; }
.tree .folder .node { padding-left: 252px; }
.tree .leaf .node { padding-left: 269px; gap: 7px; }
.tree .folder .node::before { content: ""; position: absolute; left: 242px; top: 6px; width: 8px; height: 8px; border: 1px solid #888; background: linear-gradient(#555, #555) no-repeat 1px 2px / 4px 1px, #eee; }
.tree .folder .node::after { content: ""; position: absolute; left: 251px; top: 10px; width: 6px; border-top: 1px dotted #333; }
.tree .leaf .node::before { content: ""; position: absolute; left: 262px; top: 0; width: 10px; height: 10px; border-left: 1px dotted #333; border-bottom: 1px dotted #333; }
.tree .leaf:not(.last) .node::after { content: ""; position: absolute; left: 262px; top: 9px; height: 10px; border-left: 1px dotted #333; }
.tree .on td { background: linear-gradient(#fff2c0, #fcd65a 50%, #fce9a0); }
.tree .on td:first-child { background: linear-gradient(#fff2c0, #fcd65a 50%, #fce9a0) no-repeat 273px 0; }
.vscroll { width: 17px; display: flex; flex-direction: column; align-items: center; background: #f2f3f5; }
.vscroll .up { margin: 7px 0 4px; border: 5px solid transparent; border-top: 0; border-bottom-color: #444; }
.vscroll .thumb { width: 14px; height: 218px; border: 1px solid #8b93a0; border-radius: 2px; background: repeating-linear-gradient(#888 0 1px, transparent 1px 3px) no-repeat 50% 50% / 8px 9px, linear-gradient(90deg, #f5f6f8, #e3e6ea); }
.vsplit { flex: none; width: 8px; padding-top: 353px; display: flex; flex-direction: column; align-items: center; gap: 10px; background: linear-gradient(90deg, #d4dee9, #7f8ea1); }
.vsplit i { border: 4px solid transparent; border-right-color: #24407e; border-left: 0; }
.vsplit s { width: 2px; height: 34px; background: repeating-linear-gradient(#24407e 0 2px, transparent 2px 4px); }
.vsplit.low { padding-top: 340px; width: 7px; }
.detail { flex: 1; min-width: 0; display: flex; flex-direction: column; }
.tabs { flex: none; display: flex; height: 26px; padding-right: 5px; background: linear-gradient(#dfe9f4, #c3d6ec); border-bottom: 1px solid #a5b9d4; color: #111; line-height: 24px; }
.tabs a { position: relative; padding: 0 8px; margin-right: 5px; }
.tabs a + a + a { padding: 0 6px; }
.tabs a.on { margin-right: 0; width: 69px; padding: 0 4px; background: #1753ab; border-bottom: 1px solid #0c3d85; color: #fff; font: bold 13px/22px "Noto Sans CJK SC", sans-serif; text-align: center; }
.tabs a.on::after { content: ""; position: absolute; left: 29px; bottom: 0; border: 6px solid transparent; border-bottom-color: #fff; border-top: 0; }
.tabs .dn { margin-left: auto; }
.panes { flex: 1; min-height: 0; display: flex; }
.pane { display: flex; flex-direction: column; min-width: 0; }
.pane.left { width: 377px; }
.pane.right { flex: 1; }
.subtab { flex: none; display: flex; height: 23px; padding: 2px 0 0 5px; background: linear-gradient(#f2f7fe, #cfe0fb); }
.subtab span { width: 96px; height: 21px; padding-left: 31px; clip-path: polygon(24px 0, 100% 0, 100% 100%, 0 100%); background: linear-gradient(#eaf3ff, #8db4ea); border-top: 1px solid #3f69ad; border-right: 1px solid #3f69ad; font: bold 13px/18px "Noto Sans CJK SC", sans-serif; color: #111; }
.frame { flex: 1; min-height: 0; display: flex; padding: 5px 3px 0 2px; border: 1px solid #3f69ad; background: #8fb4e8; overflow: hidden; }
.params { align-self: flex-start; flex: 1; }
.params th { height: 36px; }
.params td { height: 22px; padding-left: 1px; border-right: 1px solid #c3d4ec; border-bottom: 1px solid #c3d4ec; background: #fff; }
.params td:nth-child(2), .params td:nth-child(4) { background: #e8f1fc; }
.params tr:nth-child(even) td { background: #f3f3f3; }
.params td:first-child, .params tr:nth-child(even) td:first-child { background: #dbe7f4; border-color: #8396b5; }
.params tr:first-child td:nth-child(2) { background: #afd3f7; }
.params .key { color: #b0217f; }
.frame .vscroll { width: 13px; }
.frame .vscroll .thumb { width: 11px; height: 610px; }
.notes { padding: 4px 0 0; border-width: 1px 1px 0 2px; }
.note { flex: 1; background: #efefef; border-left: 1px solid #8396b5; }
.note:first-child { flex: none; width: 35%; border: 0; }
.note h4 { height: 26px; padding-left: 2px; line-height: 26px; background: linear-gradient(#f5f9fe, #d9e5f3); border-bottom: 1px solid #8396b5; color: #24407e; }
.chev { display: block; width: 6px; height: 6px; margin: 8px 10px 0 auto; border: solid #b5b5b5; border-width: 1px 0 0 1px; transform: rotate(45deg); }

/* PowerPoint window */
.ppt { position: absolute; left: 0; top: 277px; bottom: 0; width: 682px; display: flex; flex-direction: column; background: #fff; box-shadow: 0 0 14px 2px rgba(0, 0, 0, .4); font: 15px/20px "Open Sans", "Noto Sans CJK SC", sans-serif; overflow: hidden; }
.p-title { flex: none; display: flex; height: 34px; }
.p-name { width: 93px; display: flex; justify-content: flex-end; padding-right: 17px; line-height: 34px; white-space: nowrap; }
.p-tool { width: 74px; line-height: 34px; text-align: center; background: linear-gradient(#fff, #fdeebb); border-bottom: 2px solid #f2c846; }
.p-ctl { display: flex; gap: 33px; margin-left: auto; padding: 8px 17px 0 0; }
.p-ctl svg { width: 13px; height: 13px; fill: none; stroke: #000; }
.p-tabs { flex: none; display: flex; align-items: center; height: 30px; padding-bottom: 2px; background: #bfdbff; color: #1d4490; }
.acro { width: 93px; padding-left: 17px; }
.fmt { width: 74px; text-align: center; border: solid #9db9dd; border-width: 0 1px; }
.help { width: 14px; height: 14px; margin: 0 7px 0 auto; border-radius: 50%; background: #2b62c9; border: 1px solid #cfe0f7; outline: 1px solid #7f98bf; color: #fff; font: bold 10px/11px "Open Sans", sans-serif; }
.p-ribbon { flex: none; display: flex; gap: 3px; height: 120px; padding: 2px 0 3px; border: 1px solid #8db2e3; border-left: 0; margin-right: 2px; border-radius: 0 4px 4px 0; background: linear-gradient(#dbe7f4, #c8d9ed 25%, #d0e0f2 70%, #e3f2ff); color: #1d4490; }
.pg { display: flex; flex-direction: column; border: 1px solid #a5c0e0; border-radius: 3px; background: linear-gradient(#dce7f4, #c9d9ec 20%, #dbe7f4); }
.pg.para { width: 205px; border-left: 0; } .pg.draw { width: 276px; } .pg.edit { width: 79px; }
.pg-body { flex: 1; display: flex; min-width: 0; }
.pg footer { position: relative; height: 22px; line-height: 21px; text-align: center; background: #c1d9f1; color: #3f69aa; }
.pg.para footer { padding-right: 41px; }
.pg footer svg { position: absolute; right: 6px; top: 4px; width: 10px; height: 10px; }
.ca { flex: none; border: 3px solid transparent; border-top-color: #4a6fa8; border-bottom: 0; }
.prows { width: 167px; padding-top: 13px; }
.prow { display: flex; gap: 3px; height: 26px; margin-bottom: 13px; }
.seg { display: flex; align-items: center; justify-content: space-around; gap: 4px; padding: 0 5px; height: 26px; border: 1px solid #8faed6; border-radius: 2px; background: linear-gradient(#e3edf8, #c6d8ee); }
.prow:first-child .seg:first-child { width: 65px; padding: 0 3px 0 0; gap: 0; border-left: 0; }
.prow:first-child .seg:first-child button:first-child { margin-left: -10px; }
.prow:first-child .seg:nth-child(2) { width: 53px; }
.seg svg, .pcol svg { width: 16px; height: 16px; }
.seg.wide { width: 123px; padding-left: 0; border-left: 0; gap: 8px; }
.seg .hot { width: 12px; height: 24px; padding-top: 4px; background: #fdb95a; overflow: hidden; display: flex; justify-content: flex-end; }
.pcol { display: flex; flex-direction: column; gap: 10px; padding-top: 5px; }
.pcol button { display: flex; align-items: center; gap: 7px; }
.big { display: flex; flex-direction: column; align-items: center; width: 50px; padding-top: 7px; white-space: nowrap; }
.big:first-child { width: 54px; }
.big:nth-child(3) { width: 65px; }
.big svg { width: 32px; height: 32px; margin-bottom: 6px; }
.big .ca { margin-top: 8px; }
.plist { padding: 0; }
.plist button { display: flex; align-items: center; gap: 3px; height: 26px; white-space: nowrap; }
.plist svg { width: 20px; height: 18px; }
.plist .ca { margin-left: 3px; }
.edit .plist { padding-left: 5px; }
.stage { flex: 1; min-height: 0; display: flex; justify-content: space-between; background: linear-gradient(90deg, #8fb0de 640px, #5f86bd); border-top: 2px solid #a9c4ea; }
.slide { position: relative; width: 651px; margin-top: 112px; background: #fff; box-shadow: 3px 2px 8px #35507e; overflow: hidden; }
.banner { height: 61px; background: #339966; }
.copy p { height: 26px; white-space: nowrap; font: 14px/26px "Noto Sans CJK SC", sans-serif; }
.copy .m { font: 15px/16px "Liberation Mono", monospace; }
.copy .s { font: 12px/16px "Liberation Mono", monospace; }
.copy .l1 { margin-top: 19px; font-size: 16px; }
.copy .l1 em { color: #d81818; font-style: normal; }
.copy .l2 { margin-top: 9px; font-size: 19px; color: #d81818; }
.copy .l3 { margin-top: 51px; }
.copy .l5 { margin-top: 25px; }
.copy .l6 { margin-top: 23px; font-size: 19px; }
.copy .l7 { margin-top: -3px; font-size: 19px; color: #333; }
.copy .cut { margin-left: -10px; }
.copy .trim { margin-left: -6px; }
.copy .red { color: #d81818; }
.copy .blue { color: #2a2ad8; }
.caret { display: inline-block; width: 1px; height: 20px; background: #000; vertical-align: middle; }
.shot { position: absolute; left: 273px; top: 153px; background: #000; }
.sel { position: absolute; left: 0; top: 27px; }
.p-scroll { width: 15px; background: linear-gradient(90deg, #86a9d8, #5f86bd); border-left: 1px solid #a9c4ea; }
.p-scroll i { display: block; }
.p-scroll .up { width: 0; margin: 6px 0 0 2px; border: 5px solid transparent; border-top: 0; border-bottom-color: #2f4f80; }
.p-scroll .thumb { width: 14px; height: 8px; margin-top: 380px; border: 1px solid #5a6c88; background: #dfe7f2; }

.arrow { position: absolute; pointer-events: none; }
.a1 { left: 195px; top: 470px; }
.a2 { left: 1330px; top: 545px; }
```
FILE: script.js
```js
// Ribbon commands: [icon, label, modifier]; d = has a drop-down, g = disabled, t = switch
const tools = [['search', '型号查询(F)', 'd'], ['', '编写流程(R)', 't'], ['', '启动修改(E)<br>取消(Z)', 't'],
  ['check', '保存信息(S)', 'g'], ['print', '内部审核', 'd'], ['checksq', '指示检查', 'd'], ['upload', '发送指示', ''],
  ['cloud', '文控上网', ''], ['road', 'ECN升级', ''], ['image', '重选开料图', 'g'], ['cogs', '生成MI流程', ''],
  ['signin', 'MI数据导入', 'd'], ['download', '集成', 'd'], ['compress', '数据对比', 'd'], ['random', '选择母板', 'd'],
  ['list', '合拼模块', ''], ['smile', '导出流程信息', ''], ['wrench', '修复ECN丢流程', ''], ['star', 'ECN自动上网', 'd']];
document.getElementById('ribbon').innerHTML = tools.map(([icon, label, mod]) => mod === 't'
  ? `<label class="toggle"><div><input type="checkbox">OFF</div>${label}</label>`
  : `<button class="tool${mod === 'g' ? ' gray' : ''}"><svg><use href="#${icon}"/></svg>${label}${mod === 'd' ? '<i></i>' : ''}</button>`).join('');

// Process steps by stage
const stages = [['流程指示', '流程指示'], ['计划投料', '计划投料'], ['开料', '开料', '裁切', '磨边', '圆角', '打标'],
  ['内层图形', '内层前处理', '贴膜', '曝光', '显影', '酸性蚀刻', '退膜'], ['AOI', '冲孔', '内层AOI'], ['棕化', '棕化', '烘板'],
  ['层压', '预排', '排板', '压合', 'X-Ray冲孔', '铣边', '打字唛', '烘板'], ['减薄铜', '减薄铜'], ['钻孔', '钻微黏膜', '钻孔', '去毛刺']];
const who = '<td>P6</td><td>李凌云</td><td>方幸幸</td><td>已审核</td>';
let rows = '<tr><td><div class="node"><svg width="16" height="16"><use href="#home"/></svg>6B03204GA0</div></td><td></td><td></td><td></td><td></td></tr>';
for (const [stage, ...steps] of stages) {
  rows += `<tr class="folder"><td><div class="node"><svg width="16" height="14"><use href="#folder"/></svg>${stage}</div></td>${who}</tr>`;
  steps.forEach((s, i) => {
    const cls = 'leaf' + (i === steps.length - 1 ? ' last' : '') + (stage === '开料' && i === 0 ? ' on' : '');
    rows += `<tr class="${cls}"><td><div class="node"><svg width="14" height="16"><use href="#doc"/></svg>${s}</div></td>${who}</tr>`;
  });
}
document.getElementById('tree').innerHTML = rows;

// Parameters: name, value, unit, flag; a leading * marks an ordinary (black) name
const params = `AB板,N,,N|AB板类型,/,,N|*AB板绑定型号,/,,N|成品尺寸长,270.000,mm,Y|成品尺寸宽,172.000,mm,Y|交货单位,U,,Y|生产拼板个数,5,,Y|交货拼板个数,1,,Y|大料纬向尺寸,48.00,inch,Y|大料经向尺寸,42.00,inch,Y|生产尺寸长,24.00,inch,Y|生产尺寸宽,21.00,inch,Y|拼板利用率,71.41,%,Y|*横竖开料图纸,/,,Y|*是否为小交货面积拼板,N,,Y|纬向尺寸,24.00,inch,Y|是否顾客指定板材,N,,Y|*综合利用率是否为最高,Y,,Y|综合利用率,71.39,%,Y|开料数,4,,Y|纬向余料,0,inch,Y|经向余料,0,inch,Y|是否横竖开料,N,,Y|是否为PTFE板材,N,,Y|*是否为阴阳铜结构,N,,Y|正凹蚀,N,,Y|无卤素,N,,Y|*开料尺寸长,/,,Y|*开料尺寸宽,/,,Y|*图拼结构,/,,Y`;
document.getElementById('params').innerHTML = params.split('|').map((r, i) => {
  const [name, value, unit, flag] = r.split(',');
  const plain = name[0] === '*';
  return `<tr><td${i ? '' : ' class="mark"'}></td><td${plain ? '' : ' class="key"'}>${plain ? name.slice(1) : name}</td><td>${value}</td><td>${unit}</td><td>${flag}</td></tr>`;
}).join('');

// Drill picture on the slide
const dots = [[555,750],[536,765],[559,765],[489,772],[500,772],[525,775],[529,822],[565,827],[499,832],[510,832],[486,835],[485,846],[563,842],[503,860],[518,861],[485,865],[567,866],[556,874],[556,886],[489,884],[501,884],[515,884],[529,884],[529,892],[449,901],[449,909],[583,926],[514,930],[494,935]];
const names = ['to','ts','cs.mick','cs','sig2t','sig3b','sig4t','sig5b','sc.mick','ss','bs','bo','drl','rout','ly','fg','pj','rslok','zsh-to','xzszvia','zgxszlet','zgxszlak','dwmdm','gkk','dbkby','auto_chk','te-lot','te-bot','te-lot','sc-lot','take-to','gbt','gbb','f','cling_anva','cs_cling','cm_cling','rd.org','zgxszvia'];
const tint = ['#fff','#0aa57c','#9cdcdc','#ffc34d','#9cdcdc','#ffc34d','#9cdcdc','#ffc34d','#9cdcdc','#ffc34d','#0aa57c','#fff','#b5b5b5','#e5e5e5'];
let art = '<path d="M273 728h40v218h-40z" fill="#55cfb2"/><path d="M273 729h40v5h-40zM273 736h40v5h-40z" fill="#9cdcdc"/><path d="M274 743h8v190h-8z"/>';
art += '<text x="274" y="733" class="t">Step: cam</text><text x="273" y="740" class="t">Job Matrix ...</text>';
names.forEach((n, i) => {
  const y = 743 + i * 5;
  art += `<rect x="281" y="${y}" width="23" height="4" fill="${tint[i] || '#9cdcdc'}"/><text x="282" y="${y + 4}" class="n">${n}</text>`;
});
art += '<g stroke="#555"><path d="M448 780l49 49M448 818l31 12M448 849l31-6M448 869l49-26" fill="none"/><path d="M479 829h18v14h-18z" fill="none"/></g>';
art += dots.map(([x, y]) => `<circle cx="${x}" cy="${y}" r="4.5" fill="#459c00"/>`).join('');
art += '<path d="M309 756h139v131H309z" fill="#5a6a6a"/><path d="M309 756h139v8H309z" fill="#333"/><path d="M310 764h124v113H310z"/><path d="M435 764h12v113h-12z" fill="#55cfb2"/><path d="M310 878h136v8H310z" fill="#9cdcdc"/>';
art += '<svg x="310" y="764" width="124" height="113" viewBox="310 764 124 113"><g fill="#459c00" stroke="#c89a10" stroke-width="2"><circle cx="363" cy="816" r="29"/><circle cx="446" cy="793" r="29"/><circle cx="355" cy="886" r="28"/></g></svg>';
for (let i = 0; i < 7; i++) art += `<rect x="436" y="${765 + i * 10}" width="9" height="9" fill="#7fc9c9" stroke="#234"/><path d="M438 ${769 + i * 10}h5m-2.500-2.500v5" stroke="#111"/>`;
art += '<text x="370" y="884" class="t">Close</text><path d="M310 912h200v15H310z" fill="#fff" stroke="#1a1ad0"/><text x="312" y="922" class="r">正确做法：xzszvia铝片层必须与激光微粘膜文件大小保证一致</text>';
art += '<style>.t{font:bold 5px "Liberation Mono",monospace;fill:#123}.n{font:bold 4px "Liberation Mono",monospace;fill:#123}.r{font:bold 7px "Noto Sans CJK SC",sans-serif;fill:#e81818}</style>';
document.getElementById('shot').innerHTML = art;
```
